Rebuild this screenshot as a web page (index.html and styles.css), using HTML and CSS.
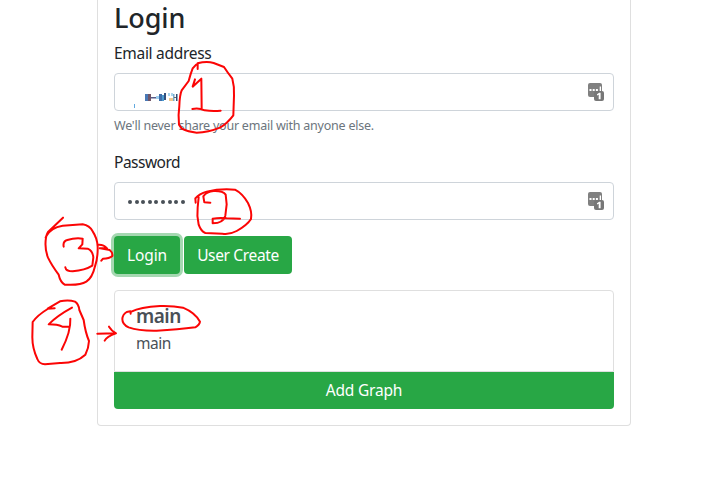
FILE: index.html
```html
<!DOCTYPE html>
<html lang="en">
<head>
<meta charset="utf-8">
<title>Login</title>
<link rel="stylesheet" href="styles.css">
</head>
<body>
<svg class="defs" width="0" height="0" aria-hidden="true">
  <symbol id="key-icon" viewBox="0 0 16 18">
    <rect width="14" height="14" rx="2" fill="#808080"/>
    <path d="M1.5 6h2v2h-2zM4.7 6h2v2h-2zM7.9 6h2v2h-2zM11.7 3.5h1.3v5h-1.3z" fill="#fff"/>
    <rect x="6" y="8" width="10" height="10" rx="2" fill="#777"/>
    <path d="M9 11.2l2.2-1.5h1.4v6.5h-1.9v-4.5l-1.7.8z" fill="#fff"/>
  </symbol>
</svg>
<main class="card">
  <h2 class="title">Login</h2>
  <form>
    <label class="label"><span class="label-email">Email address</span></label>
    <div class="input">
      <svg class="smudge" width="46" height="20" viewBox="0 0 46 20">
        <path d="M1.5 12v4" stroke="#62a9df"/>
        <path d="M12 2h3v7h-3z" fill="#4a79b5"/><path d="M15 2h3v7h-3z" fill="#725668"/>
        <path d="M18 5h5v1.5h-5z" fill="#555b88"/><path d="M23 4h3v3h-3z" fill="#9fd0ef"/>
        <path d="M26 2h3v7h-3z" fill="#3f6eaa"/><path d="M29 3h2v6h-2z" fill="#4d9bd0"/><path d="M31 1h2v7h-2z" fill="#334f7c"/>
        <path d="M35 1h2v3h-2zM38 1h2v3h-2z" fill="#abd6ee"/><path d="M36 6h4v3h-4z" fill="#efc98e"/>
        <path d="M40 2h1.5v7h-1.5z" fill="#78aacb"/><path d="M41 5h2v1h-2z" fill="#666"/><path d="M43 2h1.5v7h-1.5z" fill="#334b71"/>
      </svg>
      <svg class="key"><use href="#key-icon"/></svg>
    </div>
    <small class="help">We'll never share your email with anyone else.</small>
    <label class="label"><span class="label-password">Password</span></label>
    <div class="input">
      <span class="dots"><i></i><i></i><i></i><i></i><i></i><i></i><i></i><i></i><i></i></span>
      <svg class="key"><use href="#key-icon"/></svg>
    </div>
    <div class="actions">
      <button type="button" class="btn login">Login</button>
      <button type="button" class="btn create">User Create</button>
    </div>
  </form>
  <section class="graph">
    <h5 class="graph-name">main</h5>
    <p class="graph-text">main</p>
  </section>
  <button type="button" class="btn add">Add Graph</button>
</main>
<svg class="ink" width="704" height="497" viewBox="0 0 704 497" aria-hidden="true">
  <g transform="translate(90 0) scale(.33333)">
    <path d="M323 207V190Q350 182 371 189L402 201Q413 218 427 236Q434 262 432 287L430 346Q412 370 390 383Q355 397 320 398Q294 396 275 386L267 374Q264 345 268 318Q269 285 275 271L296 243Q302 220 308 205Q318 192 329 188"/>
    <path d="M315 238L308 260L334 236L335 325M307 327Q325 322 344 331Q368 335 392 332"/>
  </g>
  <g transform="translate(90 145) scale(.33333)">
    <path d="M317 173L316 160Q328 146 350 140Q391 130 435 134Q457 145 474 174Q487 200 483 222Q472 240 440 258Q420 269 397 266L346 264Q333 259 326 239Q320 212 323 187L326 157"/>
    <path d="M361 173L343 172L340 154Q350 139 371 138Q399 137 407 149L410 178L406 212Q400 234 368 235L368 221Q390 217 410 220L450 221"/>
  </g>
  <g transform="translate(30 205) scale(.33333)">
    <path d="M99 38L54 81L47 98M49 93Q62 68 98 62L158 58Q179 62 188 79Q202 100 203 125Q204 158 195 184Q187 219 169 230Q150 242 104 239Q91 231 86 209Q65 181 54 158Q43 130 48 98Q51 80 62 75"/>
    <path d="M101 125Q98 109 112 105Q135 98 158 101L157 118L146 130L173 131Q188 137 190 157L187 182Q165 196 128 199Q108 199 106 187M205 119Q221 118 231 130L209 130M211 130L239 135Q249 143 247 153Q238 161 219 161L214 167"/>
  </g>
  <g transform="translate(20 285) scale(.33333)">
    <path d="M104 70L83 71L120 49Q146 44 165 50Q176 57 178 75L191 105Q196 142 207 168Q206 190 196 209Q168 235 120 234L75 238Q58 237 52 222Q37 190 37 157L38 111Q52 91 83 72"/>
    <path d="M156 68Q112 92 86 118Q112 118 127 125L149 125M151 101Q153 140 125 194M232 146L287 145M267 125Q274 137 288 145Q260 154 254 167"/>
    <path d="M332 86L331 79L320 81Q308 88 307 102Q307 119 326 127Q357 138 410 137Q474 134 526 127Q539 120 540 110Q525 83 489 68Q460 62 420 63Q360 66 334 80"/>
  </g>
</svg>
</body>
</html>
```

FILE: styles.css
```css
* { box-sizing: border-box; }
body {
  margin: 0;
  height: 497px;
  overflow: hidden;
  background: #fff;
  color: #212529;
  font: 16px/24px "Noto Sans", "Open Sans", sans-serif;
}
.defs, .ink { position: absolute; left: 0; top: 0; }
.card {
  width: 534px;
  height: 426px;
  margin-left: 97px;
  padding: 0 16px;
  border: 1px solid #dfdfdf;
  border-top: 0;
  border-radius: 0 0 4px 4px;
}
.title { margin: 0; height: 41px; font-size: 27px; font-weight: 500; line-height: 35px; letter-spacing: -.1px; }
.label { display: block; height: 32px; font-size: 15.5px; }
.label-email { letter-spacing: -.3px; }
.label-password { letter-spacing: -.5px; }
.input {
  display: flex;
  align-items: center;
  justify-content: space-between;
  height: 38px;
  padding: 0 9px 0 13px;
  border: 1px solid #ced4da;
  border-radius: 4px;
}
.smudge { align-self: flex-start; margin: 18px 0 0 5px; }
.key { width: 16px; height: 18px; }
.help { display: block; height: 39px; padding-top: 5px; line-height: 20px; font-size: 12.5px; letter-spacing: -.23px; color: #6c757d; }
.dots { display: flex; gap: 2.6px; padding-top: 1px; }
.dots i { width: 4px; height: 4px; border-radius: 50%; background: #495057; }
.actions { display: flex; gap: 4px; margin: 16px 0; }
.btn {
  display: block;
  height: 38px;
  padding: 0;
  border: 0;
  border-radius: 4px;
  background: #28a745;
  color: #fff;
  font: 15.5px/38px "Noto Sans", "Open Sans", sans-serif;
}
.login { width: 66px; box-shadow: 0 0 0 3px #a5d8b1; letter-spacing: -.1px; }
.create { width: 108px; letter-spacing: -.35px; }
.graph {
  height: 82px;
  padding: 13px 21px 0;
  border: 1px solid #dfdfdf;
  border-radius: 4px 4px 0 0;
  color: #495057;
}
.graph-name { margin: 0 0 3px; font-size: 19px; font-weight: 600; line-height: 24px; letter-spacing: -.5px; }
.graph-text { margin: 0; font-size: 15.5px; letter-spacing: -.5px; }
.add { width: 100%; height: 37px; line-height: 37px; border-radius: 0 0 4px 4px; letter-spacing: -.2px; }
.ink path { fill: none; stroke: #fb0505; stroke-width: 6; stroke-linecap: round; stroke-linejoin: round; }
```
